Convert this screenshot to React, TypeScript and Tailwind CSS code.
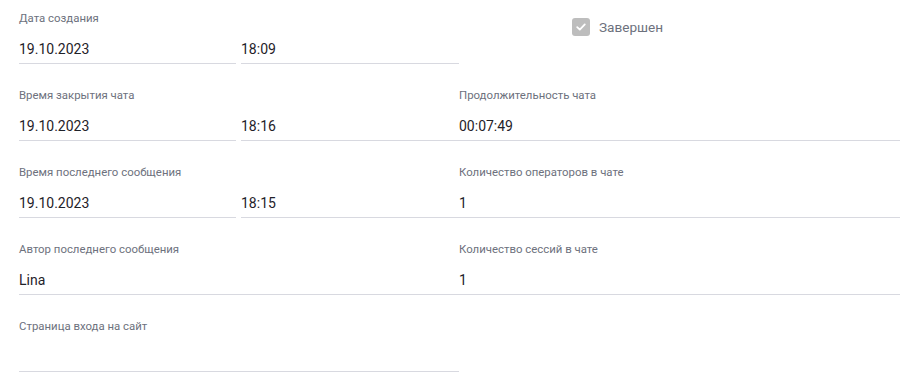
import React from "react";

const font = { fontFamily: "Roboto, 'Noto Sans', sans-serif" };

function Field({ label, value, className = "" }: { label?: string; value?: string; className?: string }) {
  return (
    <div className={"flex flex-col pt-[12px] border-b border-[#d8d9e0] " + className}>
      <div className="h-[13px] text-[11.4px] leading-[13px] text-[#6d717d] whitespace-nowrap">{label || "\u00a0"}</div>
      <div className="mt-[14px] h-[20px] text-[14px] leading-[20px] text-[#1f2229] mb-[4px] whitespace-nowrap">{value ?? ""}</div>
    </div>
  );
}

function Row({ children }: { children: React.ReactNode }) {
  return <div className="flex mb-[13px]">{children}</div>;
}

export default function App() {
  return (
    <div className="w-[918px] h-[382px] bg-white pl-[19px] overflow-hidden" style={font}>
      <Row>
        <div className="flex w-[440px] gap-[5px]">
          <Field label="Дата создания" value="19.10.2023" className="w-[217px]" />
          <Field label="" value="18:09" className="w-[218px]" />
        </div>
        <div className="w-[441px] flex items-start pt-[17px] pl-[113px]">
          <div className="flex items-center gap-[9px]">
            <div className="w-[18px] h-[18px] rounded-[3px] bg-[#bdbdbd] flex items-center justify-center">
              <svg width="12" height="12" viewBox="0 0 12 12" fill="none">
                <path d="M2.2 6.2 L4.8 8.6 L9.8 3.4" stroke="white" strokeWidth="1.8" strokeLinecap="round" strokeLinejoin="round" />
              </svg>
            </div>
            <span className="text-[13.6px] leading-[20px] text-[#6d717d]">Завершен</span>
          </div>
        </div>
      </Row>
      <Row>
        <div className="flex w-[440px] gap-[5px]">
          <Field label="Время закрытия чата" value="19.10.2023" className="w-[217px]" />
          <Field label="" value="18:16" className="w-[218px]" />
        </div>
        <Field label="Продолжительность чата" value="00:07:49" className="w-[441px]" />
      </Row>
      <Row>
        <div className="flex w-[440px] gap-[5px]">
          <Field label="Время последнего сообщения" value="19.10.2023" className="w-[217px]" />
          <Field label="" value="18:15" className="w-[218px]" />
        </div>
        <Field label="Количество операторов в чате" value="1" className="w-[441px]" />
      </Row>
      <Row>
        <Field label="Автор последнего сообщения" value="Lina" className="w-[440px]" />
        <Field label="Количество сессий в чате" value="1" className="w-[441px]" />
      </Row>
      <Row>
        <Field label="Страница входа на сайт" value="" className="w-[440px]" />
      </Row>
    </div>
  );
}
